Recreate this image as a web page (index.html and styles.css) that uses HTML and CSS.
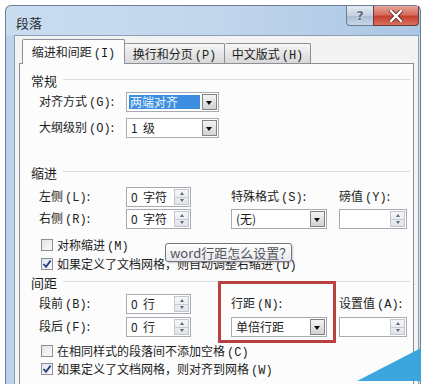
FILE: index.html
```html
<!DOCTYPE html>
<html lang="zh-CN">
<head>
<meta charset="utf-8">
<title>段落</title>
<link rel="stylesheet" href="styles.css">
</head>
<body>
<div class="screen">
  <div class="window">
    <div class="titlebar">
      <span class="title">段落</span>
      <div class="caption-btns">
        <div class="btn-help">?</div>
        <div class="btn-close">
          <svg width="14" height="12" viewBox="0 0 14 12"><path d="M2 1 L12 11 M12 1 L2 11" stroke="#5a2a24" stroke-width="4" stroke-linecap="square"/><path d="M2 1 L12 11 M12 1 L2 11" stroke="#ffffff" stroke-width="2.4" stroke-linecap="square"/></svg>
        </div>
      </div>
    </div>
    <div class="frame">
      <div class="client">
        <div class="tabs">
          <div class="tab active">缩进和间距<span class="k">(I)</span></div>
          <div class="tab t2">换行和分页<span class="k">(P)</span></div>
          <div class="tab t3">中文版式<span class="k">(H)</span></div>
        </div>
        <div class="panel">
          <div class="group-title gt1"><span>常规</span><i></i></div>
          <div class="row-simple r1">
            <span class="lbl">对齐方式<span class="k">(G)</span>:</span>
            <div class="sel w93"><span class="hl">两端对齐</span><span class="arrow"></span></div>
          </div>
          <div class="row-simple r2">
            <span class="lbl">大纲级别<span class="k">(O)</span>:</span>
            <div class="sel w93"><span class="val">1&nbsp; 级</span><span class="arrow"></span></div>
          </div>

          <div class="group-title gt2"><span>缩进</span><i></i></div>
          <div class="grid g-indent">
            <span class="lbl">左侧<span class="k">(L)</span>:</span>
            <div class="spin w65"><span class="val">0&nbsp; 字符</span><span class="spbtn"><i class="up"></i><i class="dn"></i></span></div>
            <span class="lbl">特殊格式<span class="k">(S)</span>:</span>
            <span class="lbl">磅值<span class="k">(Y)</span>:</span>

            <span class="lbl">右侧<span class="k">(R)</span>:</span>
            <div class="spin w65"><span class="val">0&nbsp; 字符</span><span class="spbtn"><i class="up"></i><i class="dn"></i></span></div>
            <div class="sel w96"><span class="val">(无)</span><span class="arrow"></span></div>
            <div class="spin w68"><span class="val"></span><span class="spbtn"><i class="up"></i><i class="dn"></i></span></div>
          </div>
          <div class="check c1"><span class="box"></span><span>对称缩进<span class="k">(M)</span></span></div>
          <div class="check c2"><span class="box on"><svg width="10" height="10" viewBox="0 0 10 10"><path d="M1.5 5 L4 7.8 L8.6 1.6" fill="none" stroke="#27407a" stroke-width="1.8"/></svg></span><span>如果定义了文档网格，则自动调整右缩进<span class="k">(D)</span></span></div>

          <div class="group-title gt3"><span>间距</span><i></i></div>
          <div class="grid g-space">
            <span class="lbl">段前<span class="k">(B)</span>:</span>
            <div class="spin w65"><span class="val">0&nbsp; 行</span><span class="spbtn"><i class="up"></i><i class="dn"></i></span></div>
            <span class="lbl">行距<span class="k">(N)</span>:</span>
            <span class="lbl">设置值<span class="k">(A)</span>:</span>

            <span class="lbl">段后<span class="k">(F)</span>:</span>
            <div class="spin w65"><span class="val">0&nbsp; 行</span><span class="spbtn"><i class="up"></i><i class="dn"></i></span></div>
            <div class="sel w96"><span class="val">单倍行距</span><span class="arrow"></span></div>
            <div class="spin w68"><span class="val"></span><span class="spbtn"><i class="up"></i><i class="dn"></i></span></div>
          </div>
          <div class="check c3"><span class="box"></span><span>在相同样式的段落间不添加空格<span class="k">(C)</span></span></div>
          <div class="check c4"><span class="box on"><svg width="10" height="10" viewBox="0 0 10 10"><path d="M1.5 5 L4 7.8 L8.6 1.6" fill="none" stroke="#27407a" stroke-width="1.8"/></svg></span><span>如果定义了文档网格，则对齐到网格<span class="k">(W)</span></span></div>
        </div>
      </div>
    </div>
  </div>
  <div class="tooltip">word行距怎么设置？</div>
  <div class="redbox"></div>
  <svg class="corner" width="425" height="384" viewBox="0 0 425 384"><polygon points="357,381 421,381 421,348" fill="#3aa6dd"/></svg>
</div>
</body>
</html>
```

FILE: styles.css
```css
* { box-sizing: border-box; }
html, body { margin: 0; padding: 0; }
body {
  width: 425px;
  height: 384px;
  overflow: hidden;
  background: #ffffff;
  font-family: "Noto Sans CJK SC", "Noto Sans", sans-serif;
  font-size: 12px;
  color: #1c1c1c;
}
.screen {
  position: relative;
  width: 425px;
  height: 384px;
  padding: 5px 0 0 5px;
}
.window {
  width: 416px;
  height: 390px;
  border: 1px solid #6c7f96;
  border-bottom: none;
  border-radius: 6px 6px 0 0;
  background: linear-gradient(90deg, #cadcef 0%, #c2d6ec 50%, #aac6e4 100%);
  display: flex;
  flex-direction: column;
}
.titlebar {
  height: 29px;
  display: flex;
  align-items: flex-start;
  padding-left: 10px;
}
.title {
  font-size: 13px;
  line-height: 16px;
  margin-top: 9px;
  color: #1e2a36;
}
.caption-btns {
  margin-left: auto;
  margin-right: 1px;
  display: flex;
}
.btn-help {
  width: 27px;
  height: 20px;
  border: 1px solid #6a7c92;
  border-top: none;
  border-right: none;
  border-radius: 0 0 0 4px;
  background: linear-gradient(#e4ebf3, #c3d1e1 50%, #aabcd2 51%, #c8d6e6);
  color: #5d6c80;
  font-family: "DejaVu Sans", sans-serif;
  font-weight: bold;
  font-size: 13px;
  line-height: 19px;
  text-align: center;
  text-shadow: 0 0 2px #ffffff;
}
.btn-close {
  width: 46px;
  height: 20px;
  border: 1px solid #6b3b35;
  border-top: none;
  border-radius: 0 0 4px 0;
  background: linear-gradient(#e8a597, #d46d5f 45%, #c5402f 55%, #d8705f);
  display: flex;
  align-items: center;
  justify-content: center;
}
.frame {
  flex: 1;
  padding: 0 1px 0 8px;
  background: linear-gradient(90deg, #bcd2ea, #d6e4f2 40%, #cddff1);
}
.client {
  height: 100%;
  border: 1px solid #8c9fb4;
  border-bottom: none;
  background: #f3f3f3;
}
.tabs {
  height: 27px;
  display: flex;
  align-items: flex-end;
  padding-left: 7px;
}
.tab {
  height: 20px;
  border: 1px solid #8c8f97;
  border-bottom: none;
  border-left: none;
  background: linear-gradient(#f7f7f7, #e6e6e6 50%, #d9d9d9);
  line-height: 18px;
  text-align: center;
  border-radius: 2px 2px 0 0;
  white-space: nowrap;
}
.tab.active {
  width: 103px;
  height: 25px;
  margin-bottom: -1px;
  border-left: 1px solid #8c8f97;
  background: #fcfcfc;
  position: relative;
  z-index: 1;
  line-height: 24px;
}
.tab.t2 { width: 101px; border-left: 1px solid #8c8f97; margin-left: -1px; padding-top: 1px; }
.tab.t3 { width: 86px; padding-top: 1px; }
.k {
  font-family: "Liberation Mono", monospace;
  font-size: 12px;
  margin-left: 2px;
}
.panel {
  margin-left: 4px;
  width: 395px;
  height: 330px;
  border: 1px solid #8c8f97;
  background: #fcfcfc;
  padding: 0 3px 0 19px;
  display: flex;
  flex-direction: column;
}
.group-title {
  height: 18px;
  display: flex;
  align-items: center;
  margin-left: -8px;
  font-size: 13px;
}
.group-title i {
  flex: 1;
  margin-left: 6px;
  border-top: 1px solid #d5dbe2;
  border-bottom: 1px solid #ffffff;
}
.gt1 { margin-top: 7px; }
.gt2 { margin-top: 25px; }
.gt3 { margin-top: 1px; }
.row-simple {
  display: grid;
  grid-template-columns: 87px 93px;
  align-items: center;
  height: 20px;
}
.r1 { margin-top: 3px; }
.r2 { margin-top: 6px; }
.lbl { line-height: 16px; white-space: nowrap; }
.grid {
  display: grid;
  grid-template-columns: 87px 105px 108px 1fr;
  grid-auto-rows: 20px;
  row-gap: 2px;
  align-items: center;
}
.g-indent { margin-top: 6px; }
.g-space { margin-top: 3px; row-gap: 3px; }
.sel, .spin {
  height: 20px;
  border: 1px solid #a7aab0;
  background: #ffffff;
  display: flex;
  align-items: stretch;
  padding: 1px;
}
.w93 { width: 93px; }
.w96 { width: 96px; }
.w65 { width: 65px; }
.w68 { width: 68px; }
.val { padding-left: 3px; line-height: 16px; flex: 1; white-space: nowrap; }
.hl {
  flex: 1;
  margin: 1px 2px 1px 1px;
  background: #3c8ee0;
  color: #eef6ff;
  line-height: 14px;
  padding-left: 1px;
}
.arrow {
  width: 15px;
  border: 1px solid #7f8287;
  background: linear-gradient(#f4f4f4, #e3e3e3 50%, #d2d2d2);
  position: relative;
}
.arrow::after {
  content: "";
  position: absolute;
  left: 3px;
  top: 6px;
  border-left: 3.5px solid transparent;
  border-right: 3.5px solid transparent;
  border-top: 4px solid #111111;
}
.spbtn {
  width: 15px;
  margin-left: auto;
  display: flex;
  flex-direction: column;
  border: 1px solid #c3c7cd;
  background: linear-gradient(#f5f6f8, #e1e4e9);
}
.spbtn i {
  flex: 1;
  display: flex;
  align-items: center;
  justify-content: center;
}
.spbtn i.up { border-bottom: 1px solid #c9cdd3; }
.spbtn i::after {
  content: "";
  border-left: 2.5px solid transparent;
  border-right: 2.5px solid transparent;
}
.spbtn i.up::after { border-bottom: 3px solid #5c6a7c; }
.spbtn i.dn::after { border-top: 3px solid #5c6a7c; }
.check {
  height: 16px;
  display: flex;
  align-items: center;
  margin-left: 2px;
  gap: 4px;
  white-space: nowrap;
}
.c1 { margin-top: 8px; }
.c2 { margin-top: 3px; }
.c3 { margin-top: 6px; }
.c4 { margin-top: 2px; }
.box {
  width: 12px;
  height: 12px;
  border: 1px solid #8e8f92;
  background: linear-gradient(135deg, #e2e3e6, #fbfbfb);
  display: flex;
  align-items: center;
  justify-content: center;
}
.box.on { background: linear-gradient(135deg, #dfe7f3, #f7f9fc); }
.tooltip {
  position: absolute;
  left: 165px;
  top: 243px;
  width: 127px;
  height: 19px;
  border: 1px solid #767676;
  border-radius: 3px;
  background: linear-gradient(#ffffff, #e6e7ef);
  color: #555555;
  font-size: 13px;
  line-height: 17px;
  padding-left: 4px;
  white-space: nowrap;
  box-shadow: 1px 1px 2px rgba(0,0,0,0.2);
}
.redbox {
  position: absolute;
  left: 218px;
  top: 281px;
  width: 118px;
  height: 62px;
  border: 3px solid #b9403f;
}
.corner {
  position: absolute;
  left: 0;
  top: 0;
  pointer-events: none;
}
```
